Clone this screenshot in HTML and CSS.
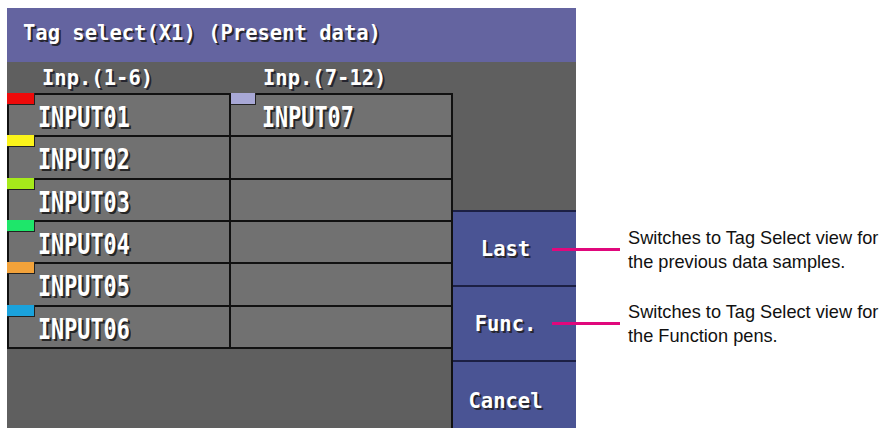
FILE: index.html
```html
<!DOCTYPE html>
<html>
<head>
<meta charset="utf-8">
<link rel="stylesheet" href="styles.css">
</head>
<body>
<div class="page">
  <div class="screen">
    <div class="titlebar"><span class="lcd">Tag select(X1) (Present data)</span></div>
    <div class="main">
      <div class="left">
        <div class="heads">
          <div class="head lcd">Inp.(1-6)</div>
          <div class="head lcd">Inp.(7-12)</div>
        </div>
        <div class="table">
          <div class="cell"><span class="mark c1"></span><span class="tag">INPUT01</span></div>
          <div class="cell col2"><span class="mark c7"></span><span class="tag">INPUT07</span></div>
          <div class="cell"><span class="mark c2"></span><span class="tag">INPUT02</span></div>
          <div class="cell col2"></div>
          <div class="cell"><span class="mark c3"></span><span class="tag">INPUT03</span></div>
          <div class="cell col2"></div>
          <div class="cell"><span class="mark c4"></span><span class="tag">INPUT04</span></div>
          <div class="cell col2"></div>
          <div class="cell"><span class="mark c5"></span><span class="tag">INPUT05</span></div>
          <div class="cell col2"></div>
          <div class="cell"><span class="mark c6"></span><span class="tag">INPUT06</span></div>
          <div class="cell col2"></div>
        </div>
        <div class="filler"></div>
      </div>
      <div class="right">
        <div class="spacer"></div>
        <div class="btn"><span class="lcd">Last</span></div>
        <div class="btn"><span class="lcd">Func.</span></div>
        <div class="btn"><span class="lcd">Cancel</span></div>
      </div>
    </div>
  </div>
  <div class="notes">
    <div class="note">Switches to Tag Select view for<br>the previous data samples.</div>
    <div class="note">Switches to Tag Select view for<br>the Function pens.</div>
  </div>
</div>
</body>
</html>
```
FILE: styles.css
```css
html, body {
  margin: 0;
  padding: 0;
  background: #ffffff;
  width: 883px;
  height: 428px;
  overflow: hidden;
}

.page {
  display: flex;
  align-items: flex-start;
}

.screen {
  margin: 8px 0 0 7px;
  width: 569px;
  height: 430px;
  display: flex;
  flex-direction: column;
  background: #5f5f5f;
}

.lcd {
  font-family: "DejaVu Sans Mono", monospace;
  font-weight: bold;
  font-size: 20.5px;
  color: #ffffff;
  text-shadow: 2px 2px 0 #262630;
  white-space: pre;
}

.titlebar {
  height: 54px;
  flex: none;
  background: #6464a0;
  display: flex;
  align-items: center;
  padding: 0 0 4px 16px;
  box-sizing: border-box;
}

.main {
  flex: 1;
  display: flex;
}

.left {
  width: 446px;
  display: flex;
  flex-direction: column;
}

.heads {
  height: 31px;
  display: flex;
}

.head {
  width: 222px;
  padding: 4px 0 0 35px;
  box-sizing: border-box;
}

.head + .head {
  padding-left: 34px;
}

.table {
  height: 256px;
  box-sizing: border-box;
  display: grid;
  grid-template-columns: 222px 222px;
  grid-template-rows: repeat(6, 1fr);
  border-top: 2px solid #111;
  border-left: 2px solid #111;
}

.cell {
  position: relative;
  background: #717171;
  border-right: 2px solid #111;
  border-bottom: 2px solid #111;
  display: flex;
  align-items: center;
  padding: 5px 0 0 29px;
}

.cell.col2 {
  padding-left: 31px;
}

.mark {
  position: absolute;
  top: -2px;
  left: -2px;
  width: 27px;
  height: 11px;
  border-right: 1px solid #222;
  border-bottom: 1px solid #222;
}

.cell.col2 .mark {
  left: 0;
  width: 24px;
  height: 11px;
}

.c1 { background: #ee0a0a; }
.c2 { background: #fcf41a; }
.c3 { background: #a6ea1a; }
.c4 { background: #1ee66a; }
.c5 { background: #f2a23a; }
.c6 { background: #1aa2dc; }
.c7 { background: #a8a8d6; }

.tag {
  display: inline-block;
  font-family: "DejaVu Sans Mono", monospace;
  font-weight: bold;
  font-size: 21.8px;
  color: #ffffff;
  text-shadow: 2px 1px 0 #262626;
  transform: scaleY(1.3);
  transform-origin: 50% 50%;
}

.filler {
  flex: 1;
  border-right: 2px solid #111;
}

.right {
  flex: 1;
  display: flex;
  flex-direction: column;
}

.spacer {
  height: 148px;
  flex: none;
}

.btn {
  height: 75px;
  flex: none;
  box-sizing: border-box;
  background: #4a5494;
  border-top: 2px solid #1c2044;
  display: flex;
  align-items: center;
  justify-content: center;
  padding-right: 18px;
}

.btn:last-child {
  height: 80px;
}

.notes {
  margin-left: 52px;
  padding-top: 226px;
  display: flex;
  flex-direction: column;
  gap: 26px;
}

.note {
  position: relative;
  font-family: "Liberation Sans", Arial, sans-serif;
  font-size: 18.2px;
  line-height: 24px;
  color: #111111;
  white-space: nowrap;
}

.note::before {
  content: "";
  position: absolute;
  left: -76px;
  top: 22px;
  width: 68px;
  height: 3px;
  background: #e0087c;
}
```
